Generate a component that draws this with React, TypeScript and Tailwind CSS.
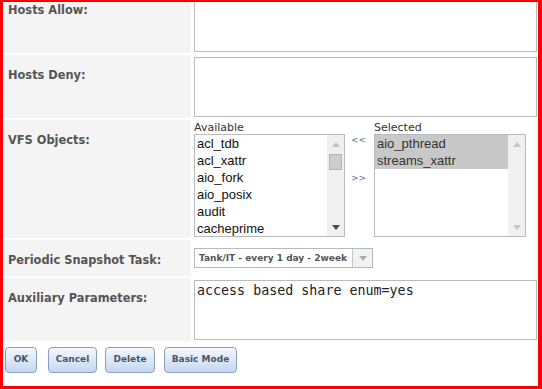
import React from 'react'

const labelFont = { fontFamily: '"DejaVu Sans", Verdana, sans-serif' }

function Row({ label, children, fieldClass = 'pt-[2px] pb-[1px]' }: { label: string; children: React.ReactNode; fieldClass?: string }) {
  return (
    <div className="flex">
      <div className="w-[188px] shrink-0 bg-[#f4f4f4] pl-[5px] pt-[14px] text-[11.4px] leading-[13px] font-bold text-[#555]" style={labelFont}>
        {label}
      </div>
      <div className={`ml-[3px] flex-1 ${fieldClass}`}>{children}</div>
    </div>
  )
}

function Arrow({ dir, color }: { dir: 'up' | 'down'; color: string }) {
  return (
    <svg width="8" height="5" viewBox="0 0 8 5">
      {dir === 'up' ? <polygon points="0,5 8,5 4,0" fill={color} /> : <polygon points="0,0 8,0 4,5" fill={color} />}
    </svg>
  )
}

function ListBox({ items, highlight, thumb }: { items: string[]; highlight?: boolean; thumb?: boolean }) {
  return (
    <div className="flex h-[103px] overflow-hidden border border-[#b8bcc2] bg-white" style={{ fontFamily: '"Liberation Sans", Arial, sans-serif' }}>
      <div className="flex-1 overflow-hidden">
        {items.map(item => (
          <div key={item} className={`h-[17px] pl-[2px] text-[13px] leading-[17px] whitespace-nowrap ${highlight ? 'bg-[#c8c8c8] text-[#333]' : 'text-[#111]'}`}>
            {item}
          </div>
        ))}
      </div>
      <div className="flex w-[17px] flex-col items-center bg-[#f0f0f0] pt-[7px] pb-[6px]">
        <Arrow dir="up" color="#c4c4c4" />
        {thumb && <div className="mt-[7px] h-[16px] w-[13px] border border-[#b4b4b4] bg-[#cdcdcd]" />}
        <div className="flex-1" />
        <Arrow dir="down" color={thumb ? '#4a4a4a' : '#c4c4c4'} />
      </div>
    </div>
  )
}

export default function App() {
  const available = ['acl_tdb', 'acl_xattr', 'aio_fork', 'aio_posix', 'audit', 'cacheprime']
  const selected = ['aio_pthread', 'streams_xattr']

  return (
    <div className="h-[389px] w-[542px] overflow-hidden border-solid border-[#ff0000] border-t-[2px] border-r-[4px] border-b-[3px] border-l-[3px] bg-white">
      <div className="-mt-[12px] flex flex-col gap-[2px]">
        {/* Hosts Allow */}
        <Row label="Hosts Allow:">
          <div className="h-[60px] w-[343px] border border-[#b8bcc2] bg-white" />
        </Row>

        {/* Hosts Deny */}
        <Row label="Hosts Deny:">
          <div className="h-[60px] w-[343px] border border-[#b8bcc2] bg-white" />
        </Row>

        {/* VFS Objects */}
        <Row label="VFS Objects:" fieldClass="pt-[2px] pb-[1px]">
          <div className="flex text-[11px] leading-[12px] text-[#333]" style={labelFont}>
            <div className="w-[151px]">
              <div>Available</div>
              <ListBox items={available} thumb />
            </div>
            <div className="w-[29px] pt-[12px] pl-[6px] text-[9px] leading-[12px] text-[#5b6f8e]" style={labelFont}>
              <div>&lt;&lt;</div>
              <div className="mt-[26px]">&gt;&gt;</div>
            </div>
            <div className="w-[152px]">
              <div>Selected</div>
              <ListBox items={selected} highlight />
            </div>
          </div>
        </Row>

        {/* Periodic Snapshot Task */}
        <Row label="Periodic Snapshot Task:" fieldClass="pt-[8px] pb-[8px]">
          <div className="flex h-[20px] w-[179px] border border-[#b4b9bf] bg-white">
            <div className="flex-1 overflow-hidden whitespace-nowrap pl-[4px] text-[9px] leading-[18px] font-bold text-[#555]" style={labelFont}>
              Tank/IT - every 1 day - 2week
            </div>
            <div className="flex w-[20px] items-center justify-center border-l border-[#c4c8cd] bg-[#f2f2f2]">
              <Arrow dir="down" color="#a3adb8" />
            </div>
          </div>
        </Row>

        {/* Auxiliary Parameters */}
        <Row label="Auxiliary Parameters:">
          <div
            className="h-[60px] w-[343px] border border-[#b8bcc2] bg-white pt-[2px] pl-[2px] text-[13.33px] leading-[16px] text-[#222]"
            style={{ fontFamily: '"DejaVu Sans Mono", monospace' }}
          >
            access based share enum=yes
          </div>
        </Row>
      </div>

      {/* Buttons */}
      <div className="mt-[6px] flex pl-[2px] text-[9px] font-bold text-[#4b5567]" style={labelFont}>
        {[
          { label: 'OK', w: 'w-[32px]', ml: '' },
          { label: 'Cancel', w: 'w-[49px]', ml: 'ml-[11px]' },
          { label: 'Delete', w: 'w-[50px]', ml: 'ml-[8px]' },
          { label: 'Basic Mode', w: 'w-[73px]', ml: 'ml-[9px]' },
        ].map(b => (
          <button
            key={b.label}
            className={`${b.w} ${b.ml} h-[26px] rounded-[4px] border border-[#8c9fb8] bg-linear-to-b from-[#f3f8fd] to-[#c4d8f2]`}
          >
            {b.label}
          </button>
        ))}
      </div>
    </div>
  )
}
